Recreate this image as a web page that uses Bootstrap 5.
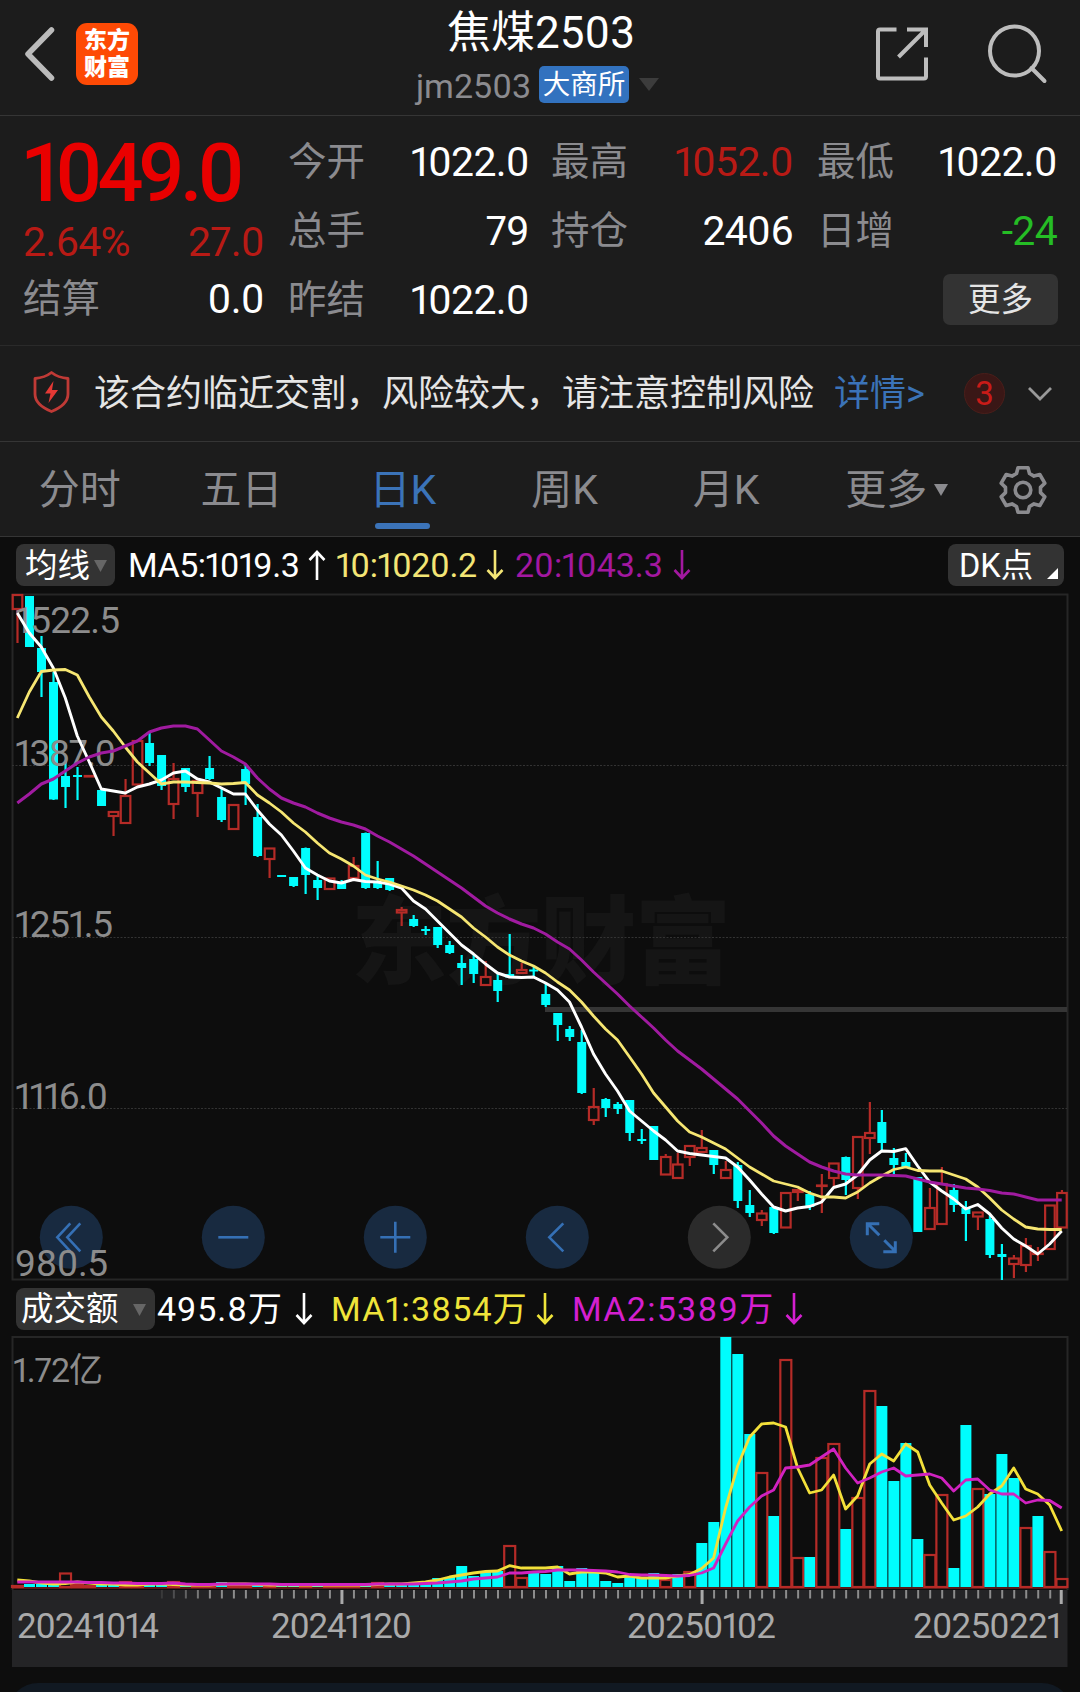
<!DOCTYPE html>
<html lang="zh-CN">
<head>
<meta charset="utf-8">
<meta name="viewport" content="width=device-width, initial-scale=1">
<title>焦煤2503</title>
<link href="https://cdn.jsdelivr.net/npm/bootstrap@5.3.0/dist/css/bootstrap.min.css" rel="stylesheet">
<style>
body{background:#0d0d0d;color:#fff;font-family:Roboto,"Noto Sans CJK SC",sans-serif;line-height:1;width:1080px;height:1692px;overflow:hidden;font-variant-numeric:proportional-nums}
svg{display:block;flex:none;overflow:visible}
.panel{background:#1c1c1c;border-bottom:1px solid #353535}
.topbar{height:116px;padding:0 32px 0 23px}
.side{width:260px}
.logo{width:62px;height:62px;border-radius:11px;background:#fe4a05;font:900 23px/27px "Noto Sans CJK SC",sans-serif;padding-top:2px;margin-left:22px}
.title-main{font-size:44px;line-height:50px;margin-top:8px;padding-left:7px}
.title-sub{font-size:34px;color:#8b8b8f;height:38px;margin-top:7px}
.exch{background:#3272bf;color:#fff;font-size:27.5px;width:90px;height:37px;border-radius:5px;margin:0 10px 0 8px;padding-top:2px}
.stats{height:230px;border-color:#2a2a2a;padding:12px 23px 0 23px}
.c1{width:241px;margin-right:24px}.c2{width:241px;margin-right:22px}.c3{width:242px;margin-right:24px}.c4{width:240px}
.line{height:69px;font-size:41px;letter-spacing:-.7px}
.line .lbl{font-size:38.5px;letter-spacing:0;color:#8b8b8f}
.big{font-size:81px;font-weight:500;letter-spacing:-5.2px;color:#e90000;height:91px}
.up{color:#b81a15}.down{color:#25bd25}
.more{width:115px;height:51px;border-radius:7px;background:#333;color:#e5e5e5;font-size:32.5px;margin:0 -1px 2px 0;padding-top:2px}
.notice{height:96px;font-size:36px;color:#e5e5e5;padding-left:31px}
.cnt{width:41px;height:41px;border-radius:50%;background:#3a1716;border:1px solid #4a1e1a;color:#c91b18;font-size:33px}
.tabs{height:95px;font-size:41px;color:#8b8b8f;padding-top:2px}
.tab-i{width:161.6px;padding-right:2px}
.tab-i.on{color:#3b73b8}
.tab-i.on::after{content:"";position:absolute;left:52px;bottom:7px;width:55px;height:6px;border-radius:3px;background:#3b73b8}
.legend{height:56px;padding-left:16px;font-size:34px}
.pill{height:42px;border-radius:8px;background:#333;color:#fff;font-size:32.5px;padding-left:9px;padding-top:2px}
.yel{color:#f3e575}.mag{color:#a318a0}
.foot{height:60px;border-radius:60px;background:#111922;margin:16px 8px 0}
</style>
</head>
<body>
<header class="panel topbar d-flex justify-content-between">
  <div class="side d-flex align-items-center pb-2">
    <svg width="31" height="56" viewBox="0 0 31 56"><path d="M28.500 4 5 28l23.500 24" fill="none" stroke="#bbb" stroke-width="5.500" stroke-linecap="round" stroke-linejoin="round"/></svg>
    <div class="logo text-center">东方<br>财富</div>
  </div>
  <div class="text-center ps-1">
    <div class="title-main">焦煤2503</div>
    <div class="title-sub d-flex align-items-center justify-content-center"><span class="pt-1">jm2503</span><span class="exch d-flex align-items-center justify-content-center">大商所</span><svg width="20" height="13"><path d="M0 0h20L10 13z" fill="#3c3c3c"/></svg></div>
  </div>
  <div class="side d-flex justify-content-end" style="padding-top:20px">
    <svg width="175" height="66" viewBox="873 20 175 66" fill="none" stroke="#bdbdbd" stroke-width="4"><path d="M896.5 29.5H880q-2 0-2 2V76.500q0 2 2 2H924q2 0 2-2V57.500M907 29.500H926V47M898.500 57 926 29.500"/><circle cx="1014.500" cy="51" r="24.500"/><path d="m1031.500 68 13 13" stroke-linecap="round"/></svg>
  </div>
</header>

<section class="panel stats d-flex">
  <div class="c1">
    <div class="big d-flex align-items-center"><span>1049.0</span></div>
    <div class="line up d-flex align-items-center justify-content-between" style="height:46px"><span>2.64%</span><span>27.0</span></div>
    <div class="line d-flex align-items-center justify-content-between"><span class="lbl">结算</span><span>0.0</span></div>
  </div>
  <div class="c2">
    <div class="line d-flex align-items-center justify-content-between"><span class="lbl">今开</span><span>1022.0</span></div>
    <div class="line d-flex align-items-center justify-content-between"><span class="lbl">总手</span><span>79</span></div>
    <div class="line d-flex align-items-center justify-content-between"><span class="lbl">昨结</span><span>1022.0</span></div>
  </div>
  <div class="c3">
    <div class="line d-flex align-items-center justify-content-between"><span class="lbl">最高</span><span class="up">1052.0</span></div>
    <div class="line d-flex align-items-center justify-content-between"><span class="lbl">持仓</span><span>2406</span></div>
  </div>
  <div class="c4">
    <div class="line d-flex align-items-center justify-content-between"><span class="lbl">最低</span><span>1022.0</span></div>
    <div class="line d-flex align-items-center justify-content-between"><span class="lbl">日增</span><span class="down">-24</span></div>
    <div class="line d-flex align-items-center justify-content-end" style="letter-spacing:0"><span class="more d-flex align-items-center justify-content-center">更多</span></div>
  </div>
</section>

<section class="panel notice d-flex align-items-center">
  <svg width="41" height="44" viewBox="0 0 41 44" class="mb-1"><path d="M20.500 2.500 C16 6 10 8 4 8.500V24c0 8 8 14 16.500 17.500C29 38 37 32 37 24V8.500C31 8 25 6 20.500 2.500z" fill="none" stroke="#c03a36" stroke-width="2.800" stroke-linejoin="round"/><path d="M22.500 11 14 23.500h5.500L17.500 33 27 20h-6z" fill="#e53935"/></svg>
  <span class="text-nowrap" style="margin-left:22px">该合约临近交割，风险较大，请注意控制风险</span>
  <span style="color:#3b73b8;margin-left:20px;width:130px">详情&gt;</span>
  <span class="cnt d-flex align-items-center justify-content-center">3</span>
  <svg width="26" height="18" viewBox="0 0 26 18" style="margin-left:22px"><path d="m2 3 11 11L24 3" fill="none" stroke="#999" stroke-width="2.800"/></svg>
</section>

<nav class="panel tabs d-flex align-items-center">
  <div class="tab-i text-center">分时</div>
  <div class="tab-i text-center">五日</div>
  <div class="tab-i on text-center position-relative h-100 d-flex align-items-center justify-content-center">日K</div>
  <div class="tab-i text-center">周K</div>
  <div class="tab-i text-center">月K</div>
  <div class="tab-i d-flex align-items-center justify-content-center" style="padding-left:18px">更多<svg width="14" height="12" style="margin-left:7px"><path d="M0 0h14L7 12z" fill="#8b8b8f"/></svg></div>
  <svg width="52" height="52" viewBox="-26 -26 52 52" style="margin-left:27px" fill="none" stroke="#8b8b8f" stroke-width="3.600" stroke-linejoin="round"><circle r="7.800"/><path d="M-6.500-16.500-5-22.300H5L6.500-16.500 11-13.900 16.800-15.500 21.800-6.800 17.500-2.600V2.600L21.800 6.800 16.800 15.500 11 13.900 6.500 16.500 5 22.300H-5L-6.500 16.500-11 13.900-16.800 15.500-21.800 6.800-17.500 2.600V-2.600L-21.800-6.800-16.800-15.500-11-13.900z"/></svg>
</nav>

<div class="legend d-flex align-items-center">
  <span class="pill d-flex align-items-center" style="width:99px">均线<svg width="13" height="12" class="ms-1"><path d="M0 0h13L6.500 12z" fill="#666"/></svg></span>
  <span class="d-flex align-items-center" style="margin-left:13px;width:208px;letter-spacing:-.500px"><span style="width:180px">MA5:1019.3</span><svg width="18" height="30" viewBox="0 0 18 30" fill="none" stroke="#fff" stroke-width="2.600"><path d="M9 30V2M1.500 10 9 2l7.500 8"/></svg></span>
  <span class="yel d-flex align-items-center" style="width:179px;letter-spacing:-.400px"><span style="width:150px">10:1020.2</span><svg width="18" height="30" viewBox="0 0 18 30" fill="none" stroke="currentColor" stroke-width="2.600"><path d="M9 0v28M1.500 20 9 28l7.500-8"/></svg></span>
  <span class="mag d-flex align-items-center" style="width:433px"><span style="width:158px">20:1043.3</span><svg width="18" height="30" viewBox="0 0 18 30" fill="none" stroke="currentColor" stroke-width="2.600"><path d="M9 0v28M1.500 20 9 28l7.500-8"/></svg></span>
  <span class="pill d-flex align-items-center justify-content-between" style="width:116px;padding-left:11px;padding-right:6px">DK点<svg width="11" height="34"><path d="M11 19v11H0z" fill="#fff"/></svg></span>
</div>

<svg id="kchart" width="1080" height="688" viewBox="0 593 1080 688"></svg>

<div class="legend d-flex align-items-center" style="height:55px;letter-spacing:.900px">
  <span class="pill d-flex align-items-center" style="width:139px;padding-left:5px;letter-spacing:0">成交额<svg width="13" height="12" style="margin-left:14px"><path d="M0 0h13L6.500 12z" fill="#666"/></svg></span>
  <span style="width:140px;padding-left:2px">495.8万</span>
  <svg width="18" height="32" viewBox="0 0 18 32" fill="none" stroke="#fff" stroke-width="2.600"><path d="M9 0v30M1.500 22 9 30l7.500-8"/></svg>
  <span class="text-nowrap" style="width:223px;padding-left:18px;color:#efe43a;letter-spacing:1.200px">MA1:3854万</span>
  <svg width="18" height="32" viewBox="0 0 18 32" fill="none" stroke="#efe43a" stroke-width="2.600"><path d="M9 0v30M1.500 22 9 30l7.500-8"/></svg>
  <span class="text-nowrap" style="width:231px;padding-left:18px;color:#d41fd0;letter-spacing:1.300px">MA2:5389万</span>
  <svg width="18" height="32" viewBox="0 0 18 32" fill="none" stroke="#d41fd0" stroke-width="2.600"><path d="M9 0v30M1.500 22 9 30l7.500-8"/></svg>
</div>

<svg id="vchart" width="1080" height="254" viewBox="0 1336 1080 254"></svg>
<svg id="axis" width="1080" height="77" viewBox="0 1590 1080 77"></svg>
<div class="foot"></div>

<script>
const X = i => 17.3 + 12.005 * i;
const RED = '#b52b27', CY = '#00fdfd';
// type, wick top, body top, body bottom, wick bottom
const candles = `r 594 595 609 643,c 596 596 647 647,c 636 648 672 697,c 672 682 799.5 800,c 760 776 787 808,c 767 775 777 800,r 776 776 776.5 776.5,c 790 790 806 806,r 811 812 816 836,r 779 796 823 823,r 741 741 784.500 784.500,c 732 743 763 766,c 755 755 786 790,r 763 779 804 819,c 768 768 787 792,r 780 781 793 817,c 756 768 779 780,c 787 797 820 822,r 805 805 829 829,c 764 769 784 805,c 804 817 856 857,r 848 848.500 859 878,c 875 875 877 877,c 877 877 886 887,c 847.500 848 875 894,c 875 880 888 900,r 878 878.500 889 889,c 880 882 889 889,r 857 866 878 878,c 832.500 833 888 889,c 861 882 888 889,c 878 878 890 891,r 907 910 912.500 926,c 915 919 926 927,c 926 929 931 935,c 927 927 945 948,c 941 945 953 954,c 955 963 968 985,c 955 959 974 983,r 961 977 985 985,c 974 980 991 1002,c 934 974 977.500 978,r 963 970 973 973,c 966 969.500 971.500 976,c 983 994 1005 1007,c 1013 1013 1025 1041,c 1026 1029 1037 1041,c 1030 1042 1093 1094,r 1088 1107 1120 1125,c 1098 1099 1108 1117,c 1102 1104 1109 1114,c 1100 1100 1133 1141,c 1129 1139 1141 1144,c 1126 1126 1160 1160,r 1154 1157 1174.500 1174.500,r 1153 1164.500 1178 1178,r 1146 1146 1157 1166,r 1130 1148 1152 1152,c 1150 1150 1165 1174,r 1161 1170 1178 1178,c 1162 1165 1201 1208,c 1190 1205 1213 1217,r 1210 1213.500 1220 1226,c 1207 1207 1233 1234,r 1193 1193 1227.500 1227.500,r 1189 1190 1192 1201,c 1191 1194 1207 1210,r 1174 1185.500 1186 1213,r 1163.500 1163.500 1178 1186,c 1156.500 1157 1180 1195,r 1137 1137 1188 1199,r 1102 1133 1138 1154,c 1110 1122 1143 1151,c 1148 1158 1165 1175,c 1153 1162 1167 1168,c 1177 1177 1232 1232,r 1188 1208 1229 1229,r 1167 1184 1224 1224,c 1184 1190 1205 1212,c 1201 1208 1214 1241,r 1212 1212.500 1216.500 1230,c 1215 1219 1255 1258,c 1244 1254 1257 1280,r 1255 1258.500 1264 1278,r 1238 1246 1265 1272,r 1247 1253.500 1254 1261,r 1205 1205.500 1249 1249,r 1190 1193 1227.500 1227.500`
  .split(',').map(s => s.split(' '));
const ma5 = [613,633,647,668,698,736,762,789,791,793,787,784,780,773,771,779,782,788,794,794,810,824,835,851,868,875,881,883,879.500,881.500,882,884,888,901,909,921,933,945,954,964,973,977,977.500,977,983,990,1002,1027,1054,1074,1091,1111,1121,1131,1140,1151,1153.500,1155,1156.500,1158,1167,1180,1194,1207,1211,1208,1206.500,1202,1187.500,1184,1175,1160,1151,1151.500,1148.700,1166,1182,1191,1199,1209,1204.500,1214,1228,1239,1246,1254,1244,1231];
const ma10 = [718,692,671.500,670,669.500,675,697,717,731,747,762,773,784,782,782,782.500,783,784,783.500,782.500,795,803,812,823,832,843,853,859,866,875,879,882,886,890,895,901,909,917,928,937,947,955,961,966,973,982,990,1002,1016,1029,1040,1057,1074,1093,1107,1121,1132,1137,1143,1149,1158,1167,1174,1181,1184,1187,1193,1197,1197,1198,1192,1183,1176,1169.500,1167,1170.500,1171,1171,1175,1179,1187,1198,1210,1219,1227,1229,1229.500,1229.500];
const ma20 = [803,794,784,779,771,763,757,753,751,746,741,732,728,726,726,729,740,751,757,764,778,789,798,803,807,813,818,822,825,829,836,842,849,856,864,872,880,888,897,906,913,919,924,928,934,942,949,960,972,983,994,1006,1017,1028,1040,1051,1060,1069,1079,1089,1099,1111,1123,1136,1146,1154,1162,1167,1171,1174,1175,1175,1175,1175.500,1176,1179,1182,1184,1186,1188,1189,1190.500,1193,1194,1197,1200,1200,1200];
// turnover bars: type + top edge
const vols = 'r1586,c1584,c1584,c1584,r1573.500,r1585,r1586,c1585,c1584,r1582,r1586,c1585,c1585,r1582,c1585,r1586,r1586,c1582,r1586,r1586,c1584,r1586,c1586,c1585,r1586,c1583,r1586,r1586,r1586,c1583,r1583,c1585,c1584,c1584,c1581,c1578,c1577,c1566,c1576,c1571,c1571,r1546,r1578,c1571,c1574,c1566,c1581,c1568,c1570,c1581,c1583,c1577,c1577,c1573,r1580,c1574,r1572,c1543,c1522,c1337,c1354,c1434,r1473,c1516,r1360,r1558,c1557,r1458,r1444,c1529,r1498,r1391,c1406,c1481,c1443,c1539,r1555,r1495,c1568,c1425,r1489,c1494,c1454,c1478,r1528,c1516,r1552,r1579'.split(',');
const vm1 = [1580,1581,1583,1584,1583.500,1582,1583,1584,1584,1585,1585,1584,1584,1584.500,1585,1585,1585,1584,1584,1584,1584.500,1585,1585,1585,1585,1585,1585,1585,1585,1585,1584.500,1584,1584,1583,1582,1580,1577,1575,1573,1571.500,1571,1565.700,1568,1568,1568,1567,1574,1572,1572,1573,1577,1576,1578,1578,1578,1576,1574.500,1568.500,1558,1508,1466,1437,1424,1423,1427,1468,1493,1490,1475,1509,1496,1464,1454,1461,1444,1452,1485,1503,1520,1516,1507,1494,1486,1468,1489,1494,1505,1531];
const vm2 = [1582,1582,1582,1582,1582,1582,1582.500,1582.500,1583,1583,1583.500,1583.500,1583.500,1583,1584,1584.500,1584.500,1584,1584,1584,1584,1584,1584.500,1584.500,1584.500,1584.500,1584.500,1584.500,1584.500,1584.500,1584,1584,1584,1584,1583.500,1583,1582,1581,1579,1578,1577,1573,1573,1572,1571.500,1570,1570,1570,1570.500,1571,1572,1574.500,1575,1575,1575.500,1576,1575.500,1573,1568,1544,1521,1507,1496,1490,1468,1467,1465,1457,1449,1468,1483,1478,1472,1468,1476,1475,1474,1478,1491,1480,1479,1490,1494,1494,1503,1500,1500.500,1508];

// every series ends on the last bar
const line = (a, c, w) => `<polyline points="${a.map((y, i) => X(i + 88 - a.length).toFixed(1) + ',' + y).join(' ')}" fill="none" stroke="${c}" stroke-width="${w}" stroke-linejoin="round"/>`;
const label = (t, x, y, len, size, c = '#8c8c8c') => `<text x="${x}" y="${y}" textLength="${len}" font-size="${size}" fill="${c}">${t}</text>`;

let k = '<text x="351" y="976" textLength="380" font-family="Noto Sans CJK SC" font-weight="900" font-size="96" fill="#151515">东方财富</text>';
k += '<path d="M12.500 1279.500V594.500H1067.500V1279.500z" fill="none" stroke="#262626" stroke-width="2"/>';
k += '<path d="M12 765.500H1067M12 937.500H1067M12 1108.500H1067" stroke="#333" stroke-dasharray="2 1.500"/>';
k += '<path d="M545 1009.500H1067" stroke="#353535" stroke-width="5"/>';
candles.forEach(([t, wt, bt, bb, wb], i) => {
  const x = X(i) + .2, f = t === 'r' ? RED : CY;
  if (t === 'c') k += `<path d="M${x} ${wt}V${wb}" stroke="${f}" stroke-width="2.2"/><rect x="${x - 4.5}" y="${bt}" width="9" height="${bb - bt}" fill="${f}"/>`;
  else k += `<path d="M${x} ${wt}V${bt}M${x} ${bb}V${wb}" stroke="${f}" stroke-width="2.2"/><rect x="${x - 4.8}" y="${bt}" width="9.600" height="${bb - bt}" fill="none" stroke="${f}" stroke-width="2.2"/>`;
});
// round chart controls
const glyphs = ['M-1-14-14 0-1 14M9-14-4 0 9 14', 'M-15 0H15', 'M-15 0H15M0-15.500V15.500', 'M6-14-8 0 6 14', 'M-6-14 8 0-6 14', 'M-14-2V-13.500H-2M-13-13-2-2M14 4V14.500H2M13 13 3 3'];
glyphs.forEach((d, i) => {
  const g = i === 4;
  k += `<g transform="translate(${71.3 + 162 * i} 1237.300)"><circle r="31.500" fill="${g ? '#2b2b2b' : '#182a40'}"/><path d="${d}" fill="none" stroke="${g ? '#8c8c8c' : '#3570b5'}" stroke-width="${i === 5 ? 3 : 2.6}"/></g>`;
});
k += label('1522.5', 15, 633, 105, 37) + label('1387.0', 15, 766, 101, 37) + label('1251.5', 15, 937, 98, 37) + label('1116.0', 15, 1109, 93, 37) + label('980.5', 15, 1276, 93, 37);
k += line(ma5, '#fff', 2.9) + line(ma10, '#f6e672', 2.8) + line(ma20, '#a01ba0', 3);
document.getElementById('kchart').innerHTML = k;

let v = '<path d="M12.500 1590V1337H1067.500V1590" fill="none" stroke="#262626" stroke-width="2"/>' + label('1.72亿', 13, 1382, 90, 34);
vols.forEach((s, i) => {
  const t = +s.slice(1), x = X(i) + .2;
  v += s[0] === 'c' ? `<rect x="${x - 5.5}" y="${t}" width="11" height="${1587 - t}" fill="${CY}"/>`
    : `<rect x="${x - 5.5}" y="${t}" width="11" height="${1587 - t}" fill="none" stroke="${RED}" stroke-width="2.2"/>`;
});
v += `<path d="M12 1588H1067" stroke="${RED}" stroke-width="1.500" opacity=".6"/>` + line(vm1, '#f3e03a', 2.8) + line(vm2, '#d022c0', 2.8);
document.getElementById('vchart').innerHTML = v;

let a = '<rect x="12" y="1590" width="1055.500" height="77" fill="#242426"/>';
for (let i = 12; i < 88; i++) {
  const major = i % 30 === 27, op = Math.min(1, (i - 11) / 5);
  a += `<path d="M${X(i) + .5 - (i === 87 ? 1 : 0)} 1590v${major ? 14 : 8.5}" stroke="${major ? '#aaa' : '#8c8c8c'}" stroke-width="${major ? 3 : 2}" opacity="${op}"/>`;
}
a += label('20241014', 17, 1638, 142, 35, '#aaa') + label('20241120', 271, 1638, 141, 35, '#aaa') + label('20250102', 627, 1638, 149, 35, '#aaa') + label('20250221', 913, 1638, 149, 35, '#aaa');
document.getElementById('axis').innerHTML = a;
</script>
<script src="https://cdn.jsdelivr.net/npm/bootstrap@5.3.0/dist/js/bootstrap.bundle.min.js"></script>
</body>
</html>
